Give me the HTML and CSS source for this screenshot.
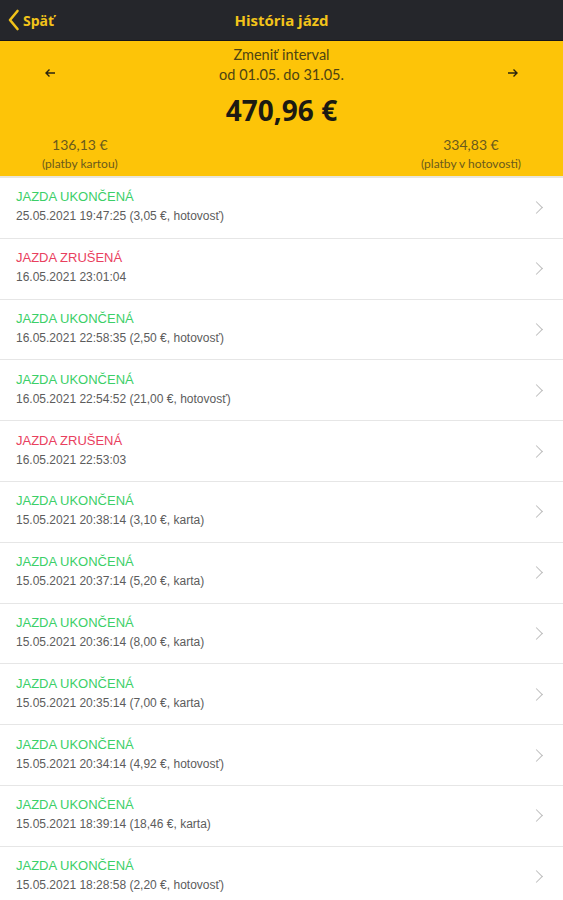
FILE: index.html
```html
<html>
  <head>
    <title>História jázd</title>
    <link rel="stylesheet" href="styles.css">
  </head>
  <body>
    <div class="nav">
      <a class="back" href="#">
        <svg width="13" height="22" viewBox="0 0 13 22"><path d="M10.5 2 L3 11 L10.5 20" fill="none" stroke="#f2c31a" stroke-width="2.6" stroke-linecap="round" stroke-linejoin="round"/></svg>
        <span>Späť</span>
      </a>
      <div class="title">História jázd</div>
    </div>

    <div class="summary">
      <div class="interval-row">
        <a class="arrow" href="#">
          <svg width="12" height="10" viewBox="0 0 12 10"><path d="M11 5 H2 M5.5 1.5 L2 5 L5.5 8.5" fill="none" stroke="#2a2410" stroke-width="1.4"/></svg>
        </a>
        <div class="interval">
          <div>Zmeniť interval</div>
          <div>od 01.05. do 31.05.</div>
        </div>
        <a class="arrow" href="#">
          <svg width="12" height="10" viewBox="0 0 12 10"><path d="M1 5 H10 M6.5 1.5 L10 5 L6.5 8.5" fill="none" stroke="#2a2410" stroke-width="1.4"/></svg>
        </a>
      </div>
      <div class="amount">470,96 €</div>
      <div class="totals">
        <div class="total">
          <div class="value">136,13 €</div>
          <div class="label">(platby kartou)</div>
        </div>
        <div class="total">
          <div class="value">334,83 €</div>
          <div class="label">(platby v hotovosti)</div>
        </div>
      </div>
    </div>

    <div class="list">
      <div class="ride">
        <div>
          <div class="state done">JAZDA UKONČENÁ</div>
          <div class="info">25.05.2021 19:47:25 (3,05 €, hotovosť)</div>
        </div>
        <span class="chev"></span>
      </div>
      <div class="ride">
        <div>
          <div class="state cancelled">JAZDA ZRUŠENÁ</div>
          <div class="info">16.05.2021 23:01:04</div>
        </div>
        <span class="chev"></span>
      </div>
      <div class="ride">
        <div>
          <div class="state done">JAZDA UKONČENÁ</div>
          <div class="info">16.05.2021 22:58:35 (2,50 €, hotovosť)</div>
        </div>
        <span class="chev"></span>
      </div>
      <div class="ride">
        <div>
          <div class="state done">JAZDA UKONČENÁ</div>
          <div class="info">16.05.2021 22:54:52 (21,00 €, hotovosť)</div>
        </div>
        <span class="chev"></span>
      </div>
      <div class="ride">
        <div>
          <div class="state cancelled">JAZDA ZRUŠENÁ</div>
          <div class="info">16.05.2021 22:53:03</div>
        </div>
        <span class="chev"></span>
      </div>
      <div class="ride">
        <div>
          <div class="state done">JAZDA UKONČENÁ</div>
          <div class="info">15.05.2021 20:38:14 (3,10 €, karta)</div>
        </div>
        <span class="chev"></span>
      </div>
      <div class="ride">
        <div>
          <div class="state done">JAZDA UKONČENÁ</div>
          <div class="info">15.05.2021 20:37:14 (5,20 €, karta)</div>
        </div>
        <span class="chev"></span>
      </div>
      <div class="ride">
        <div>
          <div class="state done">JAZDA UKONČENÁ</div>
          <div class="info">15.05.2021 20:36:14 (8,00 €, karta)</div>
        </div>
        <span class="chev"></span>
      </div>
      <div class="ride">
        <div>
          <div class="state done">JAZDA UKONČENÁ</div>
          <div class="info">15.05.2021 20:35:14 (7,00 €, karta)</div>
        </div>
        <span class="chev"></span>
      </div>
      <div class="ride">
        <div>
          <div class="state done">JAZDA UKONČENÁ</div>
          <div class="info">15.05.2021 20:34:14 (4,92 €, hotovosť)</div>
        </div>
        <span class="chev"></span>
      </div>
      <div class="ride">
        <div>
          <div class="state done">JAZDA UKONČENÁ</div>
          <div class="info">15.05.2021 18:39:14 (18,46 €, karta)</div>
        </div>
        <span class="chev"></span>
      </div>
      <div class="ride">
        <div>
          <div class="state done">JAZDA UKONČENÁ</div>
          <div class="info">15.05.2021 18:28:58 (2,20 €, hotovosť)</div>
        </div>
        <span class="chev"></span>
      </div>
    </div>
  </body>
</html>
```

FILE: styles.css
```css
body {
  margin: 0;
  background-color: #ffffff;
  font-family: "Liberation Sans", Arial, sans-serif;
  overflow: hidden;
}

a {
  text-decoration: none;
}

.nav {
  position: relative;
  height: 40px;
  background-color: #25262b;
  border-bottom: 1px solid #15161a;
  display: flex;
  align-items: center;
  justify-content: center;
}

.back {
  position: absolute;
  left: 7px;
  top: 9px;
  display: flex;
  align-items: center;
  gap: 3px;
  color: #f2c31a;
  font-family: "Open Sans", sans-serif;
  font-weight: bold;
  font-size: 14px;
}

.title {
  color: #f2c31a;
  font-family: "Open Sans", sans-serif;
  font-weight: bold;
  font-size: 15px;
}

.summary {
  background-color: #fdc408;
  height: 137px;
  box-sizing: border-box;
  padding-top: 4px;
  font-family: "Lato", sans-serif;
  border-bottom: 2px solid #e9e6dc;
}

.interval-row {
  display: flex;
  justify-content: space-between;
  padding: 0 44px;
}

.arrow {
  padding-top: 23px;
}

.interval {
  text-align: center;
  color: #4d4312;
  font-size: 14.5px;
  line-height: 20px;
}

.amount {
  margin-top: 6px;
  text-align: center;
  font-family: "Open Sans", sans-serif;
  font-weight: bold;
  font-size: 28px;
  line-height: 38px;
  color: #1c1a12;
}

.totals {
  display: flex;
  justify-content: space-between;
  padding: 0 42px;
  margin-top: 6px;
  text-align: center;
}

.total .value {
  font-size: 14px;
  line-height: 19px;
  color: #6a5a1c;
}

.total .label {
  font-size: 12px;
  line-height: 19px;
  color: #6a5a1c;
}

.ride {
  height: 59.8px;
  border-bottom: 1px solid #e6e6e6;
  box-sizing: content-box;
  display: flex;
  align-items: center;
  justify-content: space-between;
  padding: 0 22px 0 16px;
}

.ride > div {
  margin-top: -2px;
}

.state {
  font-size: 13px;
  line-height: 16px;
}

.done {
  color: #3ccf68;
}

.cancelled {
  color: #e9405e;
}

.info {
  margin-top: 3px;
  font-size: 12px;
  line-height: 16px;
  color: #5c5c5c;
}

.chev {
  width: 8px;
  height: 8px;
  border-top: 1.5px solid #bdbdbd;
  border-right: 1.5px solid #bdbdbd;
  transform: rotate(45deg);
}
```
